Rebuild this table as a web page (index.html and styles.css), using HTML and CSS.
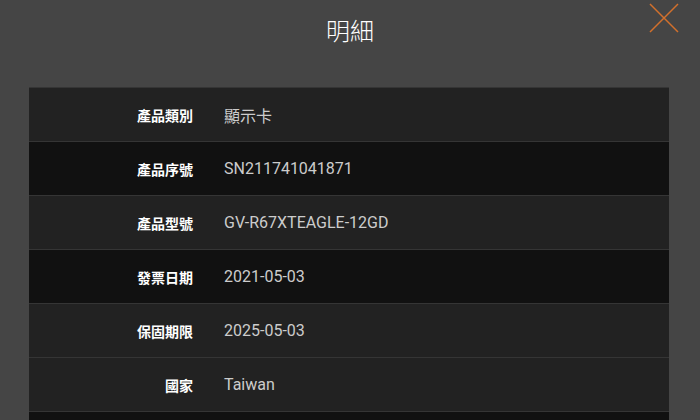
FILE: index.html
```html
<!DOCTYPE html>
<html lang="zh-Hant">
<head>
    <meta charset="UTF-8">
    <meta name="viewport" content="width=device-width, initial-scale=1.0">
    <title>明細</title>
    <link rel="stylesheet" href="styles.css">
</head>
<body>
    <div class="modal">
        <div class="modal-header">
            <h1>明細</h1>
            <a class="close" href="#" aria-label="close">
                <svg width="30" height="30" viewBox="0 0 30 30">
                    <path d="M1 1 L29 29 M29 1 L1 29" stroke="#d2702c" stroke-width="1.5" fill="none"/>
                </svg>
            </a>
        </div>
        <table class="detail">
            <tr class="light"><th>產品類別</th><td>顯示卡</td></tr>
            <tr class="dark"><th>產品序號</th><td>SN211741041871</td></tr>
            <tr class="light"><th>產品型號</th><td>GV-R67XTEAGLE-12GD</td></tr>
            <tr class="dark"><th>發票日期</th><td>2021-05-03</td></tr>
            <tr class="light"><th>保固期限</th><td>2025-05-03</td></tr>
            <tr class="light"><th>國家</th><td>Taiwan</td></tr>
            <tr class="dark"><th>&nbsp;</th><td>&nbsp;</td></tr>
        </table>
    </div>
</body>
</html>
```

FILE: styles.css
```css
html, body { margin: 0; height: 100%; }
body { background-color: #454545; font-family: Roboto, "Noto Sans CJK TC", sans-serif; overflow: hidden; }
.modal { position: relative; }
.modal-header { height: 87px; text-align: center; }
.modal-header h1 { margin: 0; line-height: 60px; font-size: 24px; font-weight: 300; color: #fff; font-family: "Noto Sans CJK TC", sans-serif; }
.close { position: absolute; top: 3px; right: 21px; display: block; width: 30px; height: 30px; }
.detail { width: 640px; margin-left: 29px; border-collapse: collapse; }
.detail tr { border-top: 1px solid #353535; }
.detail tr.light { background-color: #222; }
.detail tr.dark { background-color: #111; }
.detail th { width: 164px; height: 53px; padding: 0; text-align: right; font-family: "Noto Sans CJK TC", sans-serif; font-size: 14px; font-weight: bold; color: #fff; vertical-align: middle; }
.detail td { padding: 0 0 0 31px; font-size: 16px; color: #ccc; vertical-align: middle; }
```
